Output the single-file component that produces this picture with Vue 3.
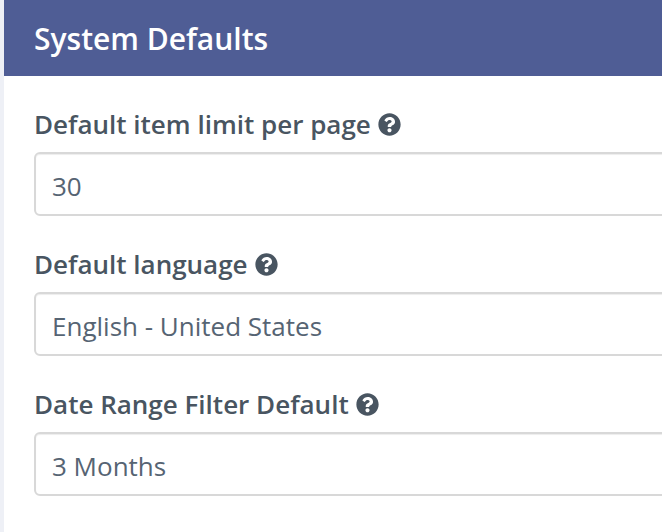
<script setup>
const fields = [
  { label: 'Default item limit per page', value: '30' },
  { label: 'Default language', value: 'English - United States' },
  { label: 'Date Range Filter Default', value: '3 Months' },
]
</script>

<template>
  <div class="page">
    <section class="panel">
      <header class="panel-head">System Defaults</header>
      <form class="panel-body">
        <div v-for="field in fields" :key="field.label" class="field">
          <label class="field-label">
            {{ field.label }}
            <svg class="help" viewBox="0 0 512 512" aria-hidden="true">
              <path d="M504 256c0 136.997-111.043 248-248 248S8 392.997 8 256C8 119.083 119.043 8 256 8s248 111.083 248 248zM262.655 90c-54.497 0-89.255 22.957-116.549 63.758-3.536 5.286-2.353 12.415 2.715 16.258l34.699 26.31c5.205 3.947 12.621 3.008 16.665-2.122 17.864-22.658 30.113-35.797 57.303-35.797 20.429 0 45.698 13.148 45.698 32.958 0 14.976-12.363 22.667-32.534 33.976C247.128 238.528 216 254.941 216 296v4c0 6.627 5.373 12 12 12h56c6.627 0 12-5.373 12-12v-1.333c0-28.462 83.186-29.647 83.186-106.667 0-58.002-60.165-102-116.531-102zM256 338c-25.365 0-46 20.635-46 46 0 25.364 20.635 46 46 46s46-20.636 46-46c0-25.365-20.635-46-46-46z" />
            </svg>
          </label>
          <input class="field-input" type="text" :value="field.value" />
        </div>
      </form>
    </section>
  </div>
</template>

<style>
html, body {
  overflow: hidden;
  background: #ffffff;
}
</style>

<style scoped>
.page {
  height: 532px;
  width: 662px;
  overflow: hidden;
  box-sizing: border-box;
  padding-left: 4px;
  background: #eef0f6;
  font-family: "Open Sans", sans-serif;
}
.panel {
  width: 900px;
  height: 100%;
  background: #ffffff;
}
.panel-head {
  height: 76px;
  box-sizing: border-box;
  padding: 0 30px;
  display: flex;
  align-items: center;
  background: #4f5d95;
  color: #ffffff;
  font-size: 30px;
  font-weight: 600;
}
.panel-body {
  padding: 28px 30px 0;
  display: flex;
  flex-direction: column;
  gap: 28px;
}
.field {
  display: flex;
  flex-direction: column;
  gap: 8px;
}
.field-label {
  display: flex;
  align-items: center;
  gap: 7px;
  height: 40px;
  color: #495561;
  font-size: 26px;
  font-weight: 600;
}
.help {
  width: 23px;
  height: 23px;
  fill: #495561;
}
.field-input {
  height: 64px;
  box-sizing: border-box;
  padding: 4px 16px 0;
  border: 2px solid #d8d8d8;
  border-radius: 6px;
  background: #ffffff;
  box-shadow: inset 0 1px 1px rgba(0, 0, 0, 0.075);
  color: #566473;
  font-family: inherit;
  font-size: 26px;
  outline: none;
}
</style>
